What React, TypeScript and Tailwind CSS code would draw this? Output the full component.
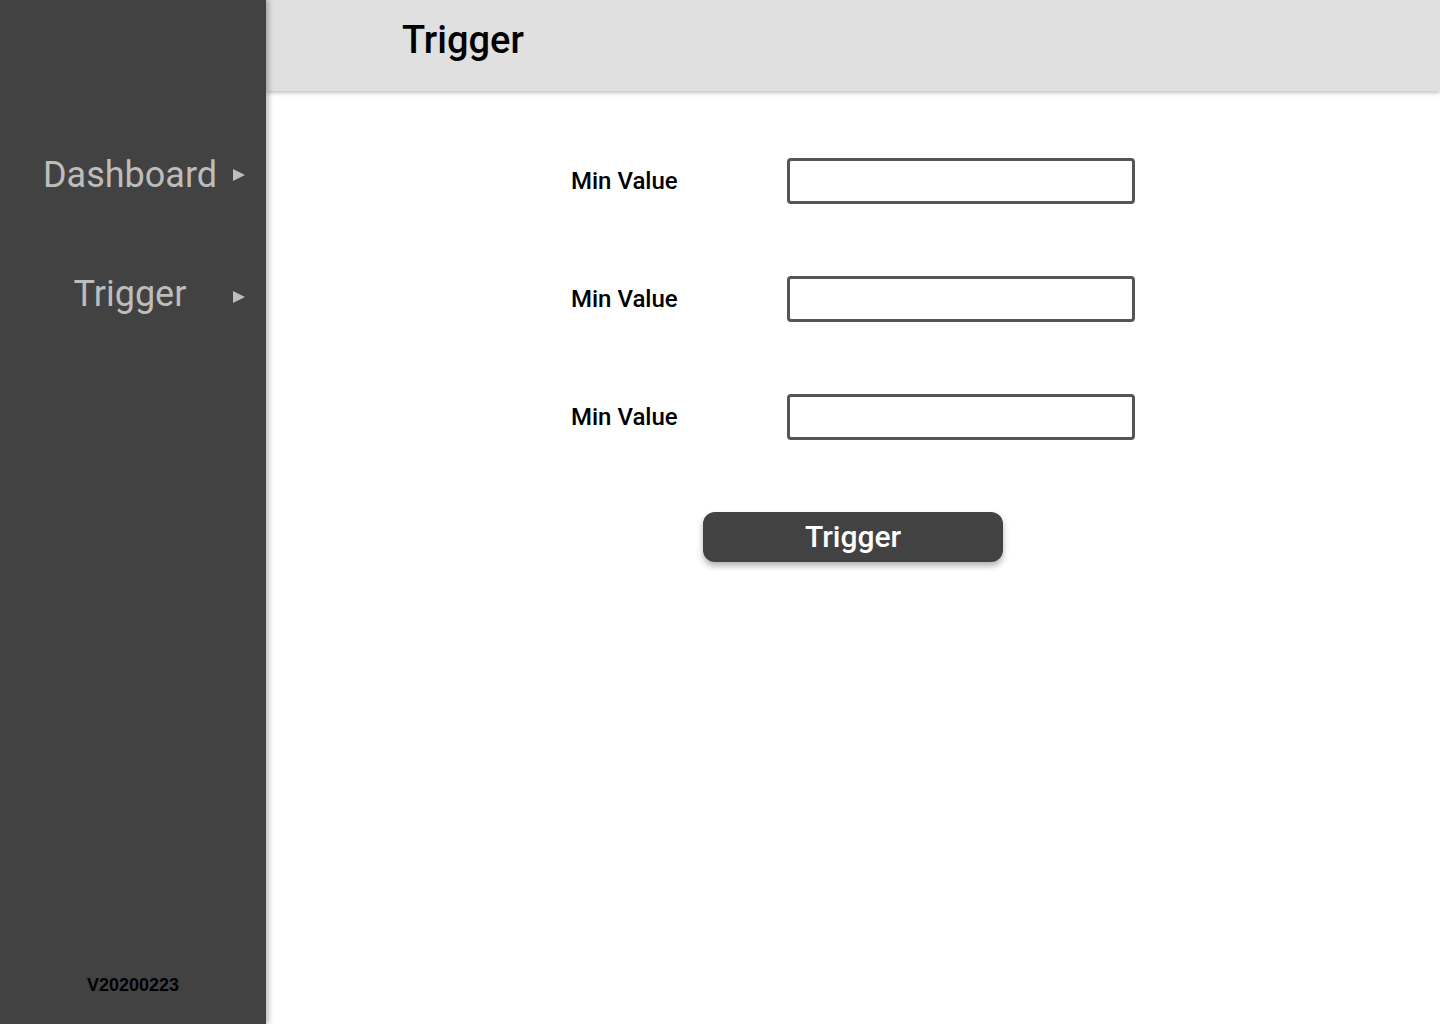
export default function App() {
  const rows = ["Min Value", "Min Value", "Min Value"];

  return (
    <div className="flex h-screen w-full overflow-hidden bg-white font-['Roboto',sans-serif]">
      {/* Sidebar */}
      <aside className="relative z-20 flex w-[266px] shrink-0 flex-col bg-[#424242] shadow-[3px_0_5px_rgba(0,0,0,0.25)]">
        <nav className="flex flex-col pt-[148px]">
          <a className="flex h-[54px] items-center text-[36px] font-normal text-[#bdbdbd]">
            <span className="flex-1 pl-[28px] text-center">Dashboard</span>
            <Arrow />
          </a>
          <a className="mt-[68px] flex h-[54px] items-center text-[36px] font-normal text-[#bdbdbd]">
            <span className="flex-1 pl-[28px] pb-[6px] text-center">Trigger</span>
            <Arrow />
          </a>
        </nav>
        <div className="mt-auto pb-[25px] text-center font-['Liberation_Sans',sans-serif] text-[18px] font-bold text-black">
          V20200223
        </div>
      </aside>

      {/* Main */}
      <main className="flex flex-1 flex-col">
        <header className="relative z-10 flex h-[91px] items-center bg-[#e0e0e0] pb-[10px] pl-[136px] shadow-[0_2px_4px_rgba(0,0,0,0.25)]">
          <h1 className="text-[38px] font-medium text-black">Trigger</h1>
        </header>

        <div className="ml-[305px] w-[564px] pt-[67px]">
          <div className="flex flex-col gap-[72px]">
            {rows.map((label, i) => (
              <div key={i} className="flex items-center">
                <label className="w-[216px] text-[24px] font-medium text-black">{label}</label>
                <input className="h-[46px] w-[348px] rounded-[4px] border-[3px] border-[#555555] bg-white px-2 outline-none" />
              </div>
            ))}
          </div>
          <div className="mt-[72px] flex justify-center">
            <button className="h-[50px] w-[300px] rounded-[12px] bg-[#424242] pb-[2px] text-[30px] font-medium text-white shadow-[0_4px_6px_rgba(0,0,0,0.3)]">
              Trigger
            </button>
          </div>
        </div>
      </main>
    </div>
  );
}

function Arrow() {
  return (
    <svg width="14" height="16" viewBox="0 0 14 16" className="mr-[20px] shrink-0">
      <polygon points="1,2 13,8 1,14" fill="#bdbdbd" />
    </svg>
  );
}
